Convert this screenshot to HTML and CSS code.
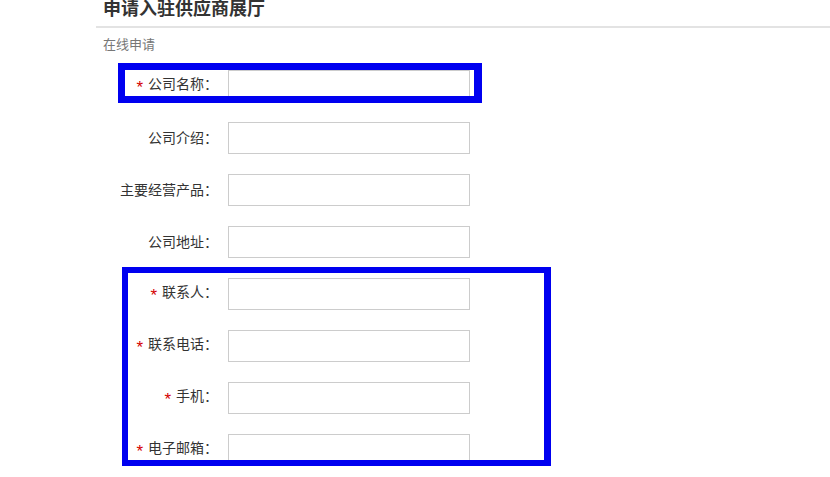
FILE: index.html
```html
<!DOCTYPE html>
<html lang="zh-CN">
<head>
    <meta charset="UTF-8"/>
    <title>申请入驻供应商展厅</title>
    <link rel="stylesheet" href="styles.css">
</head>
<body>
<div class="page">
    <h2 class="page-title">申请入驻供应商展厅</h2>
    <p class="sub-title">在线申请</p>
    <form class="apply-form">
        <label for="company"><span class="req">*</span>公司名称：</label>
        <input type="text" id="company" name="company"/>

        <label for="intro">公司介绍：</label>
        <input type="text" id="intro" name="intro"/>

        <label for="products">主要经营产品：</label>
        <input type="text" id="products" name="products"/>

        <label for="address">公司地址：</label>
        <input type="text" id="address" name="address"/>

        <label for="contact"><span class="req">*</span>联系人：</label>
        <input type="text" id="contact" name="contact"/>

        <label for="phone"><span class="req">*</span>联系电话：</label>
        <input type="text" id="phone" name="phone"/>

        <label for="mobile"><span class="req">*</span>手机：</label>
        <input type="text" id="mobile" name="mobile"/>

        <label for="email"><span class="req">*</span>电子邮箱：</label>
        <input type="text" id="email" name="email"/>
    </form>
</div>

<!-- 标注框 -->
<div class="mark mark-company"></div>
<div class="mark mark-contact"></div>
</body>
</html>
```

FILE: styles.css
```css
body {
    margin: 0;
    background: #fff;
    font-family: "Liberation Sans", "Noto Sans CJK SC", sans-serif;
    color: #333;
    overflow: hidden;
}

.page {
    margin-left: 96px;
}

.page-title {
    margin: 0;
    padding: 0 0 8px 7px;
    font-size: 18px;
    line-height: 18px;
    font-weight: bold;
    color: #333;
    border-bottom: 2px solid #e3e3e3;
}

.sub-title {
    margin: 8px 0 0 7px;
    font-size: 13px;
    line-height: 18px;
    color: #777;
}

.apply-form {
    display: grid;
    grid-template-columns: 122px 242px;
    grid-auto-rows: 32px;
    column-gap: 10px;
    row-gap: 20px;
    align-items: center;
    margin-top: 16px;
}

.apply-form label {
    text-align: right;
    font-size: 14px;
    line-height: 20px;
    color: #333;
    white-space: nowrap;
}

.req {
    color: #d40000;
    font-size: 17px;
    margin-right: 5px;
    vertical-align: -4px;
}

.apply-form input {
    width: 100%;
    height: 32px;
    box-sizing: border-box;
    border: 1px solid #ccc;
    padding: 0 6px;
    margin: 0;
    font-size: 14px;
    background: #fff;
}

.mark {
    position: absolute;
    box-sizing: border-box;
    border-style: solid;
    border-color: #0000f0;
}

.mark-company {
    left: 118px;
    top: 63px;
    width: 364px;
    height: 40px;
    border-width: 7px 8px 7px 7px;
}

.mark-contact {
    left: 122px;
    top: 267px;
    width: 429px;
    height: 199px;
    border-width: 6px 7px 6px 6px;
}
```
